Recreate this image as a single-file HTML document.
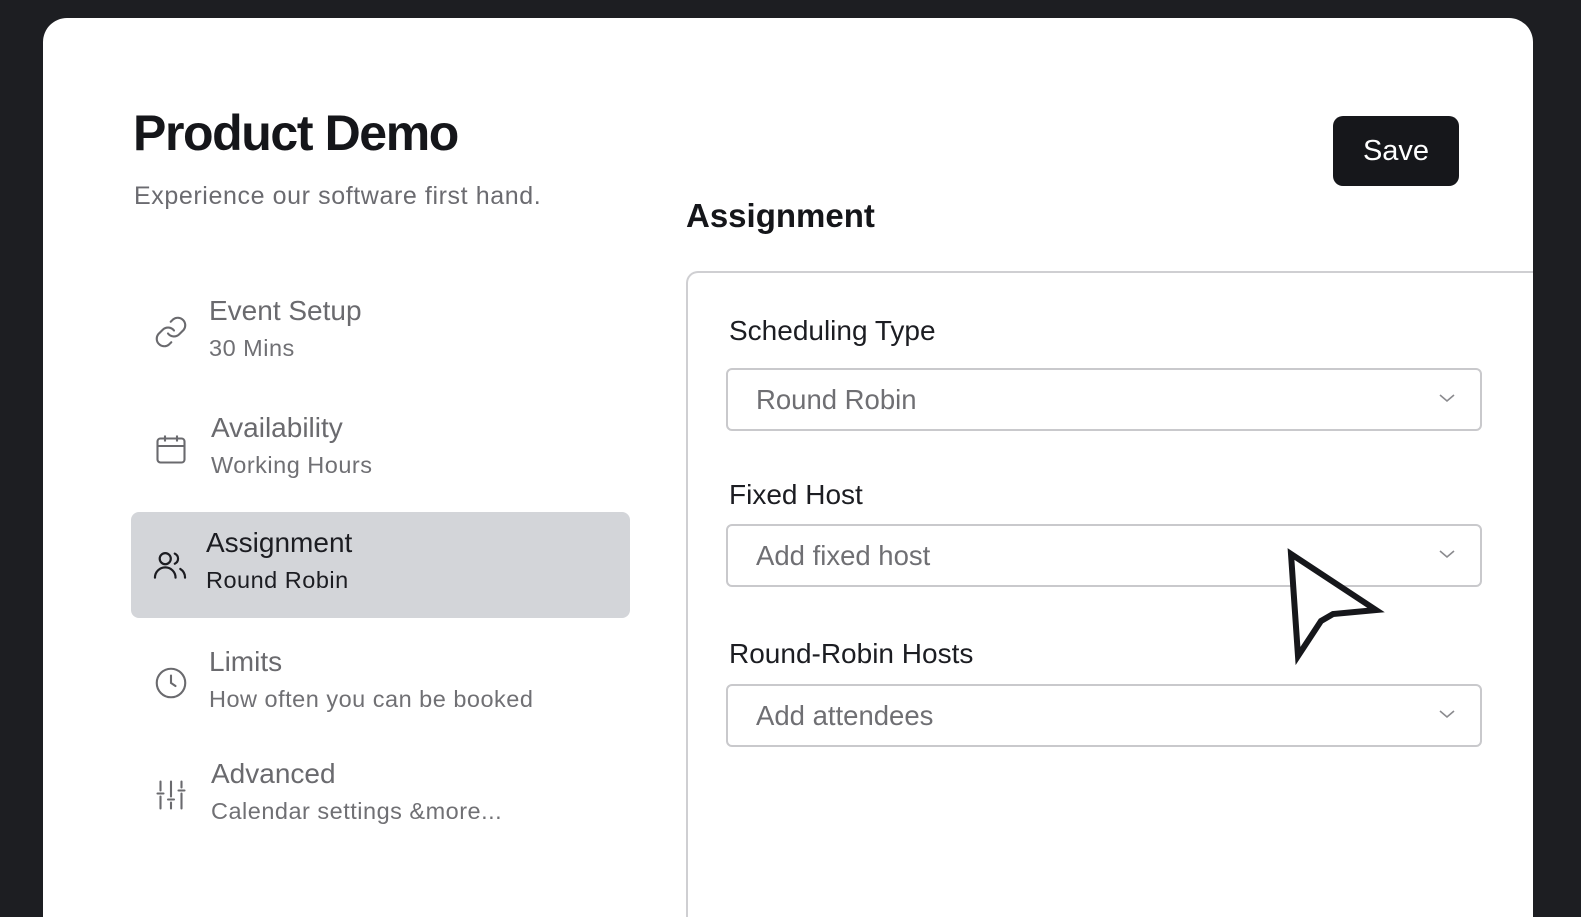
<!DOCTYPE html>
<html><head><style>
*{margin:0;padding:0;box-sizing:border-box}
html,body{width:1581px;height:917px;overflow:hidden}
body{background:#1d1e22;font-family:"Liberation Sans",sans-serif;position:relative}
.wrap{position:absolute;left:0;top:0;width:1581px;height:917px;overflow:hidden}
.card{position:absolute;left:43px;top:18px;width:1490px;height:899px;background:#fff;border-radius:24px 24px 0 0;overflow:hidden}
.abs{position:absolute}
h1{position:absolute;left:133px;top:104px;font-size:50px;font-weight:700;color:#15161a;letter-spacing:-1.4px}
.sub{left:134px;top:182px;font-size:25px;color:#6b6b70;letter-spacing:.6px}
.save{left:1333px;top:116px;width:126px;height:70px;background:#16171b;border-radius:10px;color:#fff;font-size:29px;text-align:center;line-height:70px}
.h2{left:686px;top:197px;font-size:33px;font-weight:700;color:#15161a}
.panel{left:643px;top:253px;width:900px;height:700px;border:2px solid #cfcfd2;border-radius:12px 0 0 0;border-right:none}
.item{position:absolute;left:131px;width:499px;height:106px;border-radius:8px}
.item .t{position:absolute;left:78px;top:15px;font-size:28px;color:#6a6a6e}
.item .s{position:absolute;left:78px;top:55px;font-size:23.5px;color:#707074;letter-spacing:.5px}
.item svg{position:absolute;left:22px;top:34px}
.sel{background:#d3d5d9}
.sel .t,.sel .s{color:#1c1d22;left:75px}
.lbl{font-size:28px;color:#1c1d22;left:729px}
.sel-box{position:absolute;left:726px;width:756px;height:63px;border:2px solid #c9c9cc;border-radius:6px;font-size:27.5px;color:#6f6f73;padding-left:28px;line-height:59px}
.sel-box svg{position:absolute;right:24px;top:22px}
</style></head><body><div class="wrap">
<div class="card"><div class="abs panel"></div></div>
<h1>Product Demo</h1>
<div class="abs sub">Experience our software first hand.</div>
<div class="abs save">Save</div>
<div class="abs h2">Assignment</div>

<div class="item" style="top:280px"><svg width="36" height="36" viewBox="0 0 24 24" fill="none" stroke="#6a6a6e" stroke-width="1.4" stroke-linecap="round"><path d="M10 13a5 5 0 0 0 7.5.5l3-3a5 5 0 0 0-7-7l-1.7 1.7"/><path d="M14 11a5 5 0 0 0-7.5-.5l-3 3a5 5 0 0 0 7 7l1.7-1.7"/></svg><div class="t">Event Setup</div><div class="s">30 Mins</div></div>
<div class="item" style="top:397px"><svg width="36" height="36" viewBox="0 0 24 24" fill="none" stroke="#6a6a6e" stroke-width="1.4"><rect x="3" y="5" width="18" height="16" rx="2"/><path d="M3 10h18M8 3v4M16 3v4"/></svg><div class="t" style="left:80px">Availability</div><div class="s" style="left:80px">Working Hours</div></div>
<div class="item sel" style="top:512px"><svg width="38" height="38" viewBox="0 0 24 24" fill="none" stroke="#1c1d22" stroke-width="1.4" stroke-linecap="round" style="left:20px"><circle cx="9" cy="8" r="3.5"/><path d="M2.5 20a6.5 6.5 0 0 1 13 0M15 4.8a3.5 3.5 0 0 1 0 6.4M18.5 14.5a6.5 6.5 0 0 1 3 5.5"/></svg><div class="t">Assignment</div><div class="s">Round Robin</div></div>
<div class="item" style="top:631px"><svg width="36" height="36" viewBox="0 0 24 24" fill="none" stroke="#6a6a6e" stroke-width="1.4" stroke-linecap="round"><circle cx="12" cy="12" r="9.5"/><path d="M12 7v5l3 2"/></svg><div class="t">Limits</div><div class="s">How often you can be booked</div></div>
<div class="item" style="top:743px"><svg width="36" height="36" viewBox="0 0 24 24" fill="none" stroke="#6a6a6e" stroke-width="1.4" stroke-linecap="round"><path d="M5 3v6M5 13v8M12 3v10M12 17v4M19 3v4M19 11v10M3 11h4M10 15h4M17 9h4"/></svg><div class="t" style="left:80px">Advanced</div><div class="s" style="left:80px">Calendar settings &amp;more...</div></div>

<div class="abs lbl" style="top:315px">Scheduling Type</div>
<div class="sel-box" style="top:368px">Round Robin<svg width="18" height="12" viewBox="0 0 18 12" fill="none" stroke="#8a8a8e" stroke-width="1.6"><path d="M2 3l7 6 7-6"/></svg></div>
<div class="abs lbl" style="top:479px">Fixed Host</div>
<div class="sel-box" style="top:524px">Add fixed host<svg width="18" height="12" viewBox="0 0 18 12" fill="none" stroke="#8a8a8e" stroke-width="1.6"><path d="M2 3l7 6 7-6"/></svg></div>
<div class="abs lbl" style="top:638px">Round-Robin Hosts</div>
<div class="sel-box" style="top:684px">Add attendees<svg width="18" height="12" viewBox="0 0 18 12" fill="none" stroke="#8a8a8e" stroke-width="1.6"><path d="M2 3l7 6 7-6"/></svg></div>

<svg class="abs" style="left:0;top:0" width="1581" height="917"><path d="M1291 554 L1376 610 L1333 614 L1321 621 L1298 656 Z" fill="#fff" stroke="#16171b" stroke-width="6" stroke-linejoin="miter"/></svg>
</div></body></html>
